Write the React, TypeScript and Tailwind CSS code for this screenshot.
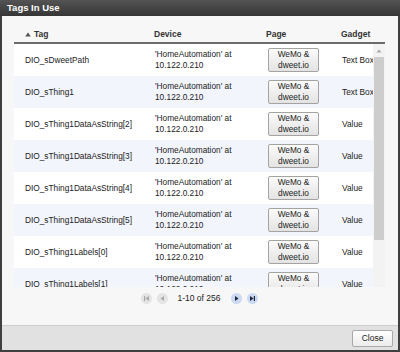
import React from 'react';

const rows = [
  { tag: 'DIO_sDweetPath', gadget: 'Text Box' },
  { tag: 'DIO_sThing1', gadget: 'Text Box' },
  { tag: 'DIO_sThing1DataAsString[2]', gadget: 'Value' },
  { tag: 'DIO_sThing1DataAsString[3]', gadget: 'Value' },
  { tag: 'DIO_sThing1DataAsString[4]', gadget: 'Value' },
  { tag: 'DIO_sThing1DataAsString[5]', gadget: 'Value' },
  { tag: 'DIO_sThing1Labels[0]', gadget: 'Value' },
  { tag: 'DIO_sThing1Labels[1]', gadget: 'Value' },
  { tag: 'DIO_sThing1Labels[2]', gadget: 'Value' },
  { tag: 'DIO_sThing1Labels[3]', gadget: 'Value' },
];

function PagerIcon({ kind, enabled }: { kind: 'first' | 'prev' | 'next' | 'last'; enabled: boolean }) {
  const fill = enabled ? '#1d2840' : '#a9a9a9';
  return (
    <div
      className={`w-[11px] h-[11px] rounded-full flex items-center justify-center ${
        enabled ? 'bg-[#cbdaf0]' : 'bg-[#e4e4e4]'
      }`}
    >
      <svg width="7" height="7" viewBox="0 0 7 7">
        {kind === 'first' && (
          <>
            <rect x="1" y="1" width="1.2" height="5" fill={fill} />
            <path d="M6 1 L2.5 3.5 L6 6 Z" fill={fill} />
          </>
        )}
        {kind === 'prev' && <path d="M5 1 L1.5 3.5 L5 6 Z" fill={fill} />}
        {kind === 'next' && <path d="M2 1 L5.5 3.5 L2 6 Z" fill={fill} />}
        {kind === 'last' && (
          <>
            <path d="M1 1 L4.5 3.5 L1 6 Z" fill={fill} />
            <rect x="4.8" y="1" width="1.2" height="5" fill={fill} />
          </>
        )}
      </svg>
    </div>
  );
}

export default function App() {
  return (
    <div className="w-[400px] h-[352px] flex flex-col bg-[#3f3f3f] overflow-hidden font-['Liberation_Sans',Arial,sans-serif] text-[#222]">
      {/* Title bar */}
      <div className="h-[16px] shrink-0 flex items-center px-[7px] bg-gradient-to-b from-[#545454] to-[#363636] text-white font-bold text-[9.5px]">
        Tags In Use
      </div>

      <div className="flex-1 mx-[2px] mb-[2px] flex flex-col bg-[#f7f7f7]">
        <div className="flex-1 pt-[11px] pl-[12px] pr-[13px] flex flex-col">
          {/* Header */}
          <div className="h-[17px] flex items-center border-b-2 border-[#6b6b6b] text-[8.5px] font-bold text-[#333]">
            <div className="w-[136px] pl-[11px] flex items-center gap-[3px]">
              <svg width="6" height="5" viewBox="0 0 6 5">
                <path d="M3 0.5 L5.8 4.5 L0.2 4.5 Z" fill="#555" />
              </svg>
              <span>Tag</span>
            </div>
            <div className="w-[112px] pl-[4px]">Device</div>
            <div className="w-[73px] pl-[4px]">Page</div>
            <div className="pl-[6px]">Gadget</div>
          </div>

          {/* Scroll area */}
          <div className="h-[243px] flex">
            <div className="w-[359px] overflow-hidden">
              {rows.map((r, i) => (
                <div
                  key={r.tag}
                  className={`h-[32px] flex items-center text-[8.3px] ${i % 2 === 0 ? 'bg-white' : 'bg-[#f2f5fb]'}`}
                >
                  <div className="w-[136px] shrink-0 pl-[11px] whitespace-nowrap">{r.tag}</div>
                  <div className="w-[112px] shrink-0 pl-[5px] leading-[11px] whitespace-nowrap">
                    <div>'HomeAutomation' at</div>
                    <div>10.122.0.210</div>
                  </div>
                  <div className="w-[73px] shrink-0 pl-[6px]">
                    <div className="w-[51px] h-[24px] flex flex-col items-center justify-center leading-[11px] border border-[#a3a3a3] rounded-[2px] bg-gradient-to-b from-[#fbfbfb] to-[#e3e3e3]">
                      <span>WeMo &amp;</span>
                      <span>dweet.io</span>
                    </div>
                  </div>
                  <div className="w-[38px] shrink-0 pl-[7px] whitespace-nowrap overflow-hidden">{r.gadget}</div>
                </div>
              ))}
            </div>
            {/* Scrollbar */}
            <div className="w-[12px] bg-[#f3f3f3] flex flex-col">
              <div className="h-[13px] flex items-center justify-center">
                <svg width="6" height="4" viewBox="0 0 6 4">
                  <path d="M3 0.5 L5.5 3.5 L0.5 3.5 Z" fill="#a8a8a8" />
                </svg>
              </div>
              <div className="h-[183px] mx-[1px] bg-[#cdcdcd]" />
            </div>
          </div>

          {/* Pager */}
          <div className="h-[22px] flex items-center justify-center text-[8.5px] text-[#222]">
            <PagerIcon kind="first" enabled={false} />
            <div className="w-[5px]" />
            <PagerIcon kind="prev" enabled={false} />
            <span className="ml-[9px] mr-[10px]">1-10 of 256</span>
            <PagerIcon kind="next" enabled />
            <div className="w-[5px]" />
            <PagerIcon kind="last" enabled />
          </div>
        </div>

        {/* Footer */}
        <div className="h-[25px] shrink-0 border-t border-[#cdcdcd] bg-[#e1e1e1] flex items-center justify-end pr-[5px]">
          <div className="w-[41px] h-[17px] flex items-center justify-center text-[8.5px] border border-[#a9a9a9] rounded-[2px] bg-gradient-to-b from-[#ffffff] to-[#ececec]">
            Close
          </div>
        </div>
      </div>
    </div>
  );
}
